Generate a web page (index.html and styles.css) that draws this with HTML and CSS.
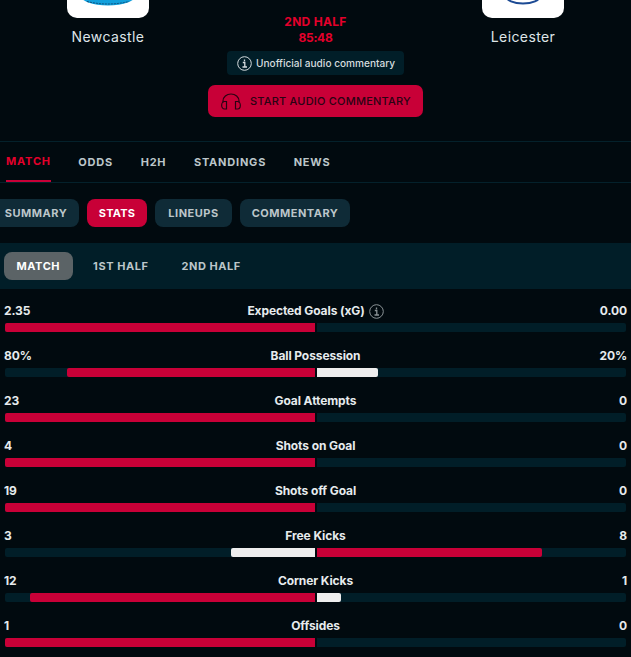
FILE: index.html
```html
<!DOCTYPE html>
<html lang="en">
<head>
<meta charset="utf-8">
<title>Newcastle v Leicester</title>
<link rel="stylesheet" href="styles.css">
</head>
<body>
<header class="score">
  <div class="team">
    <div class="logo">
      <svg class="crest" viewBox="0 0 66 6" width="66" height="6"><ellipse cx="33" cy="-5" rx="28" ry="10.500" fill="#12a0dc"/><path d="M12 1.500Q33 6.500 54 1.500" fill="none" stroke="#0c4f7c" stroke-width="1" stroke-dasharray="2 1"/></svg>
    </div>
    <div class="team-name">Newcastle</div>
  </div>
  <div class="centre">
    <div class="phase">2ND HALF</div>
    <div class="clock">85:48</div>
    <div class="notice">
      <svg class="info" viewBox="0 0 15 15" width="15" height="15"><circle cx="7.500" cy="7.500" r="6.800" fill="none" stroke="currentColor"/><path d="M5.800 6.500H7.800V11M5.500 11H10M7.500 3.500V5.200" fill="none" stroke="currentColor" stroke-width="1.300"/></svg>
      <span>Unofficial audio commentary</span>
    </div>
    <button class="audio">
      <svg viewBox="0 0 20 17" width="20" height="17"><path d="M2 9.500V8a8 7 0 0 1 16 0v1.500" fill="none" stroke="currentColor" stroke-width="1.200"/><path d="M5.500 8.500V16H3.500A2.800 3.700 0 0 1 3.500 8.500ZM14.500 8.500V16H16.500A2.800 3.700 0 0 0 16.500 8.500Z" fill="none" stroke="currentColor" stroke-width="1.200"/></svg>
      <span>START AUDIO COMMENTARY</span>
    </button>
  </div>
  <div class="team">
    <div class="logo">
      <svg class="crest" viewBox="0 0 66 6" width="66" height="6"><ellipse cx="33" cy="-4" rx="17" ry="7.500" fill="#fff" stroke="#1c4a94" stroke-width="2"/></svg>
    </div>
    <div class="team-name">Leicester</div>
  </div>
</header>
<nav class="tabs">
  <a class="tab active">MATCH</a>
  <a class="tab">ODDS</a>
  <a class="tab">H2H</a>
  <a class="tab">STANDINGS</a>
  <a class="tab">NEWS</a>
</nav>
<nav class="pills">
  <a class="pill">SUMMARY</a>
  <a class="pill on">STATS</a>
  <a class="pill">LINEUPS</a>
  <a class="pill">COMMENTARY</a>
</nav>
<nav class="periods">
  <a class="period on">MATCH</a>
  <a class="period">1ST HALF</a>
  <a class="period">2ND HALF</a>
</nav>
<section class="stats">
  <div class="stat">
    <div class="stat-head"><span>2.35</span><span class="stat-name">Expected Goals (xG)<svg class="info dim" viewBox="0 0 15 15" width="15" height="15"><circle cx="7.500" cy="7.500" r="6.800" fill="none" stroke="currentColor"/><path d="M5.800 6.500H7.800V11M5.500 11H10M7.500 3.500V5.200" fill="none" stroke="currentColor" stroke-width="1.300"/></svg></span><span>0.00</span></div>
    <div class="bars"><div class="side left"><div class="fill home" style="width:100%"></div></div><div class="side"></div></div>
  </div>
  <div class="stat">
    <div class="stat-head"><span>80%</span><span class="stat-name">Ball Possession</span><span>20%</span></div>
    <div class="bars"><div class="side left"><div class="fill home" style="width:80%"></div></div><div class="side"><div class="fill away" style="width:20%"></div></div></div>
  </div>
  <div class="stat">
    <div class="stat-head"><span>23</span><span class="stat-name">Goal Attempts</span><span>0</span></div>
    <div class="bars"><div class="side left"><div class="fill home" style="width:100%"></div></div><div class="side"></div></div>
  </div>
  <div class="stat">
    <div class="stat-head"><span>4</span><span class="stat-name">Shots on Goal</span><span>0</span></div>
    <div class="bars"><div class="side left"><div class="fill home" style="width:100%"></div></div><div class="side"></div></div>
  </div>
  <div class="stat">
    <div class="stat-head"><span>19</span><span class="stat-name">Shots off Goal</span><span>0</span></div>
    <div class="bars"><div class="side left"><div class="fill home" style="width:100%"></div></div><div class="side"></div></div>
  </div>
  <div class="stat">
    <div class="stat-head"><span>3</span><span class="stat-name">Free Kicks</span><span>8</span></div>
    <div class="bars"><div class="side left"><div class="fill away" style="width:27.100%"></div></div><div class="side"><div class="fill home-r" style="width:72.800%"></div></div></div>
  </div>
  <div class="stat">
    <div class="stat-head"><span>12</span><span class="stat-name">Corner Kicks</span><span>1</span></div>
    <div class="bars"><div class="side left"><div class="fill home" style="width:92%"></div></div><div class="side"><div class="fill away" style="width:7.800%"></div></div></div>
  </div>
  <div class="stat">
    <div class="stat-head"><span>1</span><span class="stat-name">Offsides</span><span>0</span></div>
    <div class="bars"><div class="side left"><div class="fill home" style="width:100%"></div></div><div class="side"></div></div>
  </div>
</section>
</body>
</html>
```

FILE: styles.css
```css
* { box-sizing: border-box; }
html, body { margin: 0; padding: 0; }
body {
  width: 631px;
  height: 657px;
  overflow: hidden;
  background: #010a0f;
  color: #e6ebed;
  font-family: Inter, "Liberation Sans", sans-serif;
}
.score {
  height: 142px;
  display: flex;
  justify-content: center;
  border-bottom: 1px solid #04212b;
}
.team {
  width: 216px;
  display: flex;
  flex-direction: column;
  align-items: center;
}
.logo {
  width: 82px;
  height: 18px;
  background: #fff;
  border-radius: 0 0 10px 10px;
  display: flex;
  justify-content: center;
  align-items: flex-start;
}
.team-name {
  margin-top: 10px;
  font-size: 14px;
  line-height: 18px;
  letter-spacing: 0.4px;
  color: #dfe5e8;
}
.centre {
  width: 199px;
  display: flex;
  flex-direction: column;
  align-items: center;
  flex-shrink: 0;
  padding-top: 14px;
}
.phase, .clock {
  font-size: 12px;
  line-height: 16px;
  font-weight: 700;
  color: #e4002b;
  letter-spacing: 0.3px;
}
.clock { letter-spacing: -0.3px; }
.notice {
  margin-top: 5px;
  height: 24px;
  width: 177px;
  flex-shrink: 0;
  padding: 0 0 0 10px;
  display: flex;
  align-items: center;
  gap: 4px;
  background: #011e28;
  border-radius: 4px;
  font-size: 10.100px;
  font-weight: 500;
  white-space: nowrap;
  color: #d5dcdf;
}
.info { flex-shrink: 0; color: #d5dcdf; }
.audio {
  margin-top: 10px;
  width: 215px;
  height: 32px;
  border: 0;
  flex-shrink: 0;
  border-radius: 7px;
  background: #c80037;
  color: #2a0313;
  display: flex;
  align-items: center;
  gap: 9px;
  padding: 0 0 0 13px;
  font-family: inherit;
  font-size: 11px;
  font-weight: 500;
  letter-spacing: 0.2px;
  white-space: nowrap;
}
.tabs {
  height: 41px;
  display: flex;
  gap: 27.500px;
  padding: 0 6px;
  border-bottom: 1px solid #04212b;
}
.tab {
  height: 40px;
  display: flex;
  align-items: center;
  font-size: 11px;
  font-weight: 700;
  letter-spacing: 0.8px;
  color: #bcc6ca;
}
.tab.active {
  color: #e4002b;
  border-bottom: 2px solid #c80037;
}
.pills {
  height: 60px;
  display: grid;
  grid-template-columns: 87px 60px 77px 110px;
  grid-template-rows: 28px;
  gap: 8px;
  padding: 16px 0 0 0;
  margin-left: -8px;
}
.pill {
  display: flex;
  align-items: center;
  justify-content: center;
  background: #0f2b37;
  border-radius: 8px;
  font-size: 11px;
  font-weight: 700;
  letter-spacing: 0.5px;
  color: #bcc6ca;
}
.pill:first-child { padding-left: 1px; }
.pill.on { background: #c80037; color: #fff; letter-spacing: 0.2px; }
.periods {
  height: 46px;
  background: #011e28;
  display: flex;
  align-items: center;
  gap: 8px;
  padding: 0 4px;
}
.period {
  height: 28px;
  padding: 0 12.500px;
  display: flex;
  align-items: center;
  border-radius: 8px;
  font-size: 11px;
  font-weight: 700;
  letter-spacing: 0.55px;
  color: #bcc6ca;
}
.period.on { background: #5b6366; color: #fff; }
.stats { padding-top: 13px; }
.stat { height: 45px; }
.stat-head {
  height: 18px;
  padding: 0 4px;
  display: flex;
  justify-content: space-between;
  align-items: center;
  font-size: 12px;
  font-weight: 700;
  letter-spacing: -0.1px;
  line-height: 18px;
  color: #e6ebed;
  position: relative;
}
.stat-name {
  position: absolute;
  left: 0;
  right: 0;
  display: flex;
  justify-content: center;
  align-items: center;
  gap: 4px;
}
.dim { color: #8b9396; }
.bars {
  margin: 3px 5px 0;
  height: 9px;
  display: flex;
  gap: 2px;
}
.side {
  flex: 1;
  display: flex;
  background: #011e28;
  border-radius: 0 2px 2px 0;
  justify-content: flex-start;
}
.side.left {
  justify-content: flex-end;
  border-radius: 2px 0 0 2px;
}
.fill { height: 100%; }
.home { background: #c80037; border-radius: 2px 0 0 2px; }
.home-r { background: #c80037; border-radius: 0 2px 2px 0; }
.away { background: #eeeeee; }
.side.left .away { border-radius: 2px 0 0 2px; }
.side:not(.left) .away { border-radius: 0 2px 2px 0; }
```
